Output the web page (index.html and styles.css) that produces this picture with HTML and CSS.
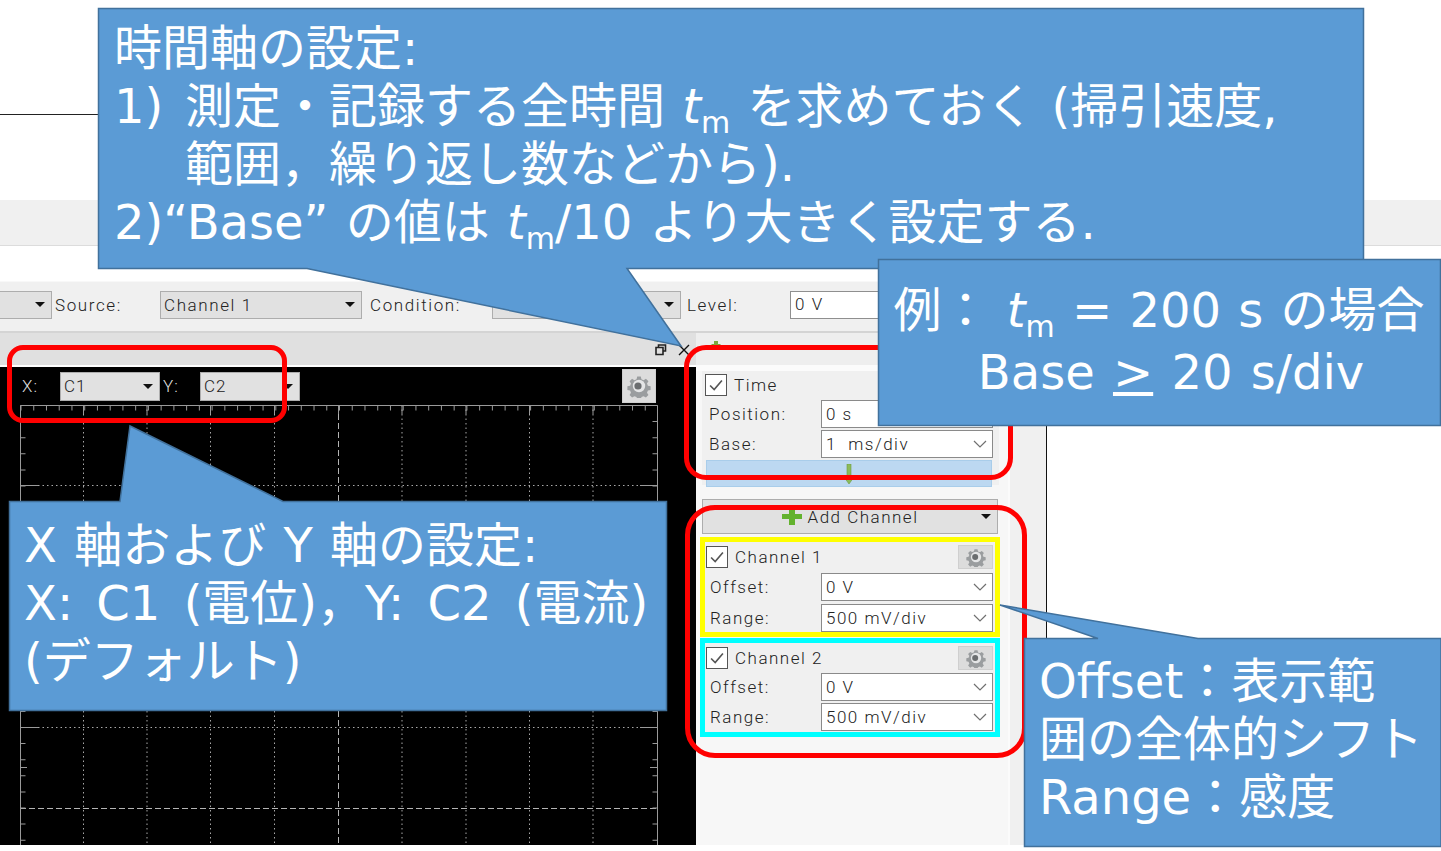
FILE: index.html
```html
<!DOCTYPE html>
<html lang="ja">
<head>
<meta charset="utf-8">
<title>時間軸の設定</title>
<link rel="stylesheet" href="styles.css">
</head>
<body>
<svg class="defs" width="0" height="0" aria-hidden="true">
  <symbol id="gear" viewBox="0 0 24 24">
    <path fill="#9a9d9f" d="M10 1.500h4l.7 3 2.400 1 2.600-1.600 2.800 2.800-1.600 2.600 1 2.400 3 .7v4l-3 .7-1 2.400 1.600 2.600-2.800 2.800-2.600-1.600-2.400 1-.7 3h-4l-.7-3-2.400-1-2.600 1.600-2.800-2.800 1.600-2.600-1-2.400-3-.7v-4l3-.7 1-2.400-1.600-2.600 2.800-2.800 2.600 1.600 2.400-1z" transform="translate(1.200 1.200) scale(.9)"/>
    <circle cx="12" cy="12" r="6.200" fill="#e4e5e6"/>
    <circle cx="11" cy="12" r="3.600" fill="#6a6d6f"/>
  </symbol>
  <symbol id="chev" viewBox="0 0 14 8">
    <path d="M1 1l6 6 6-6" fill="none" stroke="#707070" stroke-width="1.200"/>
  </symbol>
  <symbol id="check" viewBox="0 0 22 22">
    <path d="M4.500 11.500l4.500 4.500 8.500-10" fill="none" stroke="#555" stroke-width="1.800"/>
  </symbol>
</svg>

<div class="slide">
  <div class="top-rule"></div>
  <div class="band"></div>

  <div class="toolbar">
    <div class="combo combo-a"><i class="caret"></i></div>
    <span class="tlabel tl-source">Source:</span>
    <div class="combo combo-b"><span>Channel 1</span><i class="caret"></i></div>
    <span class="tlabel tl-cond">Condition:</span>
    <div class="combo combo-c"><i class="caret"></i></div>
    <span class="tlabel tl-level">Level:</span>
    <div class="level-input">0 V</div>
  </div>

  <div class="main">
    <div class="left">
      <div class="tabbar">
        <svg class="restore" viewBox="0 0 12 12"><path d="M3.500 3V1h7v6H8.500M1 3.500h7v7H1z" fill="none" stroke="#222" stroke-width="1.600"/></svg>
        <svg class="close" viewBox="0 0 12 12"><path d="M1 1l10 10M11 1L1 11" stroke="#111" stroke-width="1.400"/></svg>
      </div>
      <div class="scope">
        <svg class="plot" viewBox="0 0 695 478">
          <g class="dots">
            <path d="M83.500 38V478M147 38V478M210.500 38V478M274.500 38V478M402 38V478M466 38V478M529.500 38V478M593 38V478"/>
            <path d="M20 118.500H657M20 199H657M20 280H657M20 360.500H657"/>
          </g>
          <g class="dashes">
            <path d="M338.500 38V478"/>
            <path d="M20 441.500H657"/>
          </g>
          <path class="frame" d="M20.500 478V38.500H657.500V478"/>
          <g class="ticks">
            <path class="t-top" d="M20.500 41H657"/>
            <path class="t-left" d="M23 38V478"/>
            <path class="t-right" d="M655 38V478"/>
            <path d="M20 118.500H38M640 118.500H657M20 199H32M645 199H657M20 280H38M640 280H657M20 360.500H38M640 360.500H657M20 400.500H27M650 400.500H657"/>
            <path d="M83.500 38V47M147 38V47M210.500 38V47M274.500 38V47M338.500 38V47M402 38V47M466 38V47M529.500 38V47M593 38V47"/>
          </g>
        </svg>
        <div class="scope-controls">
          <span class="slabel sl-x">X:</span>
          <div class="combo scombo"><span>C1</span><i class="caret"></i></div>
          <span class="slabel sl-y">Y:</span>
          <div class="combo scombo"><span>C2</span><i class="caret"></i></div>
          <div class="gear-btn scope-gear"><svg><use href="#gear"/></svg></div>
        </div>
      </div>
    </div>

    <div class="panel">
      <div class="panel-col">
        <div class="panel-top"><svg class="mini-arrow" viewBox="0 0 12 8"><path d="M4 0h4v3h3L6 8 1 3h3z" fill="#7aa83e"/></svg></div>
        <div class="panel-gap"></div>
        <div class="group time-group">
          <div class="chk-row">
            <span class="chk"><svg><use href="#check"/></svg></span><span class="chk-label">Time</span>
          </div>
          <div class="row"><span class="rlabel">Position:</span><div class="field"><span>0 s</span></div></div>
          <div class="row"><span class="rlabel">Base:</span><div class="field"><span>1&nbsp; ms/div</span><svg class="chev"><use href="#chev"/></svg></div></div>
          <div class="apply"><svg class="apply-arrow" viewBox="0 0 10 20"><path d="M3 0h4v13h3l-5 7-5-7h3z" fill="#8dbb5a" stroke="#6c9a3f" stroke-width=".6"/></svg></div>
        </div>
        <div class="add-btn">
          <svg class="plus" viewBox="0 0 20 16"><path d="M7 0h6v5h7v5h-7v6H7v-6H0V5h7z" fill="#63b22e"/></svg>
          <span>Add Channel</span>
          <i class="caret caret-add"></i>
        </div>
        <div class="group channel yellow">
          <div class="chk-row">
            <span class="chk"><svg><use href="#check"/></svg></span><span class="chk-label">Channel 1</span>
            <div class="gear-btn chan-gear"><svg><use href="#gear"/></svg></div>
          </div>
          <div class="row"><span class="rlabel">Offset:</span><div class="field"><span>0 V</span><svg class="chev"><use href="#chev"/></svg></div></div>
          <div class="row"><span class="rlabel">Range:</span><div class="field"><span>500 mV/div</span><svg class="chev"><use href="#chev"/></svg></div></div>
        </div>
        <div class="group channel cyan">
          <div class="chk-row">
            <span class="chk"><svg><use href="#check"/></svg></span><span class="chk-label">Channel 2</span>
            <div class="gear-btn chan-gear"><svg><use href="#gear"/></svg></div>
          </div>
          <div class="row"><span class="rlabel">Offset:</span><div class="field"><span>0 V</span><svg class="chev"><use href="#chev"/></svg></div></div>
          <div class="row"><span class="rlabel">Range:</span><div class="field"><span>500 mV/div</span><svg class="chev"><use href="#chev"/></svg></div></div>
        </div>
      </div>
      <div class="panel-side"></div>
    </div>
  </div>

  <div class="redbox rb-xy"></div>
  <div class="redbox rb-time"></div>
  <div class="redbox rb-chan"></div>

  <svg class="callouts" viewBox="0 0 1441 851">
    <path d="M98.500 8.500H1363.500V268.500H627L681 346L307 268.500H98.500z"/>
    <path d="M878.500 259.500H1440.500V425.500H878.500z"/>
    <path d="M9.500 501.500H120L130 426L283 501.500H666.500V710.500H9.500z"/>
    <path d="M1024.500 638.500H1098L1000 605L1198 638.500H1441V846.500H1024.500z"/>
  </svg>

  <div class="note note-time">
    <div class="line">時間軸の設定:</div>
    <div class="line"><span class="num">1)</span>測定・記録する全時間 <i>t</i><sub>m</sub> を求めておく (掃引速度,</div>
    <div class="line hang">範囲，繰り返し数などから).</div>
    <div class="line">2)“Base” の値は <i>t</i><sub>m</sub>/10 より大きく設定する.</div>
  </div>
  <div class="note note-ex">
    <div class="line">例： <i>t</i><sub>m</sub> = 200 s の場合</div>
    <div class="line line-base">Base <u>&gt;</u> 20 s/div</div>
  </div>
  <div class="note note-xy">
    <div class="line line-xy1">X 軸および Y 軸の設定:</div>
    <div class="line line-xy2">X: C1 (電位)，Y: C2 (電流)</div>
    <div class="line">(デフォルト)</div>
  </div>
  <div class="note note-off">
    <div class="line">Offset：表示範</div>
    <div class="line">囲の全体的シフト</div>
    <div class="line">Range：感度</div>
  </div>
</div>
</body>
</html>
```
FILE: styles.css
```css
* { box-sizing: border-box; }
html, body { margin: 0; padding: 0; background: #fff; }
.defs { position: absolute; }

.slide {
  position: relative;
  width: 1441px;
  height: 851px;
  overflow: hidden;
  background: #fff;
  font-family: "Roboto", "Liberation Sans", sans-serif;
  color: #222;
}

.top-rule { width: 100px; height: 1px; margin-top: 114px; background: #222; }
.band {
  height: 46px;
  margin-top: 85px;
  background: #f0f0f0;
  border-bottom: 1px solid #dcdcdc;
}

.toolbar {
  display: flex;
  align-items: center;
  height: 52px;
  margin-top: 35px;
  padding-bottom: 4px;
  background: #f0f0f0;
  border-top: 1px solid #f8f8f8;
  border-bottom: 2px solid #d4d4d4;
  font-size: 17px;
  letter-spacing: 1.600px;
  font-weight: 300;
}
.combo {
  display: flex;
  align-items: center;
  justify-content: space-between;
  height: 28px;
  padding: 0 6px 0 3px;
  background: #e1e1e1;
  border: 1px solid #adadad;
}
.caret {
  display: block;
  width: 0;
  height: 0;
  border-left: 5px solid transparent;
  border-right: 5px solid transparent;
  border-top: 5px solid #111;
}
.combo-a { width: 52px; border-left: 0; justify-content: flex-end; }
.combo-b { width: 202px; }
.combo-c { width: 189px; justify-content: flex-end; }
.tlabel { white-space: nowrap; }
.tl-source { width: 108px; padding-left: 3px; }
.tl-cond { width: 130px; padding-left: 8px; }
.tl-level { width: 109px; padding-left: 6px; }
.level-input {
  width: 300px;
  height: 28px;
  padding: 2px 4px;
  background: #fff;
  border: 1px solid #8f8f8f;
}

.main { display: flex; height: 512px; }
.left { display: flex; flex-direction: column; width: 696px; }
.tabbar {
  display: flex;
  align-items: center;
  justify-content: flex-end;
  gap: 11px;
  height: 34px;
  padding: 0 6px 0 0;
  background: #e0e0e0;
  border-bottom: 2px solid #fff;
}
.restore { width: 12px; height: 12px; margin-top: 2px; }
.close { width: 12px; height: 12px; margin-top: 2px; }

.scope { position: relative; flex: 1; background: #000; }
.plot { position: absolute; inset: 0; width: 695px; height: 478px; }
.dots path { fill: none; stroke: #a8a8a8; stroke-width: 1; stroke-dasharray: 1.500 3; }
.dashes path { fill: none; stroke: #b4b4b4; stroke-width: 1; stroke-dasharray: 6 3; }
.frame { fill: none; stroke: #9a9a9a; stroke-width: 1; }
.ticks path { fill: none; stroke: #9a9a9a; stroke-width: 1; }
.ticks .t-top { stroke-width: 5; stroke-dasharray: 1 11.740; }
.ticks .t-left, .ticks .t-right { stroke-width: 5; stroke-dasharray: 1 15.100; }

.scope-controls {
  position: relative;
  display: flex;
  align-items: center;
  height: 38px;
  font-size: 17px;
  font-weight: 300;
  letter-spacing: 1px;
}
.slabel { color: #ddd; }
.sl-x { width: 60px; padding-left: 22px; }
.sl-y { width: 40px; padding-left: 3px; }
.scombo { width: 100px; height: 29px; }
.gear-btn {
  display: flex;
  align-items: center;
  justify-content: center;
  background: #dcdcdc;
  border: 1px solid #cfcfcf;
}
.gear-btn svg { width: 24px; height: 24px; filter: blur(.5px); }
.scope-gear { width: 34px; height: 34px; margin-left: 322px; }

.panel {
  display: flex;
  width: 351px;
  background: #f0f0f0;
  border-right: 1px solid #111;
}
.panel-col {
  width: 314px;
  padding-left: 6px;
  background: #f7f7f7;
  border-right: 2px solid #fbfbfb;
  font-size: 17px;
  font-weight: 300;
  letter-spacing: 1.500px;
}
.panel-side { flex: 1; }
.panel-top { position: relative; height: 32px; margin-left: -6px; background: #eeeeee; }
.mini-arrow { position: absolute; left: 14px; top: 8px; width: 12px; height: 8px; }
.panel-gap { height: 6px; background: #fbfbfb; margin-left: -6px; }

.group { width: 297px; background: #f0f0f0; }
.time-group { padding: 0 5px 0 3px; height: 114px; }
.chk-row { position: relative; display: flex; align-items: center; height: 28px; }
.chk {
  display: block;
  width: 22px;
  height: 22px;
  background: #fff;
  border: 1px solid #555;
}
.chk svg { display: block; width: 20px; height: 20px; }
.chk-label { margin-left: 7px; }
.row { display: flex; align-items: center; height: 30px; }
.rlabel { width: 116px; padding-left: 4px; }
.field {
  display: flex;
  align-items: center;
  justify-content: space-between;
  width: 172px;
  height: 28px;
  padding: 0 4px;
  background: #fff;
  border: 1px solid #8a8a8a;
}
.chev { width: 14px; height: 8px; margin-right: 1px; }
.apply {
  display: flex;
  justify-content: center;
  align-items: center;
  width: 286px;
  height: 27px;
  margin: 1px 0 0 1px;
  background: #bcd8f1;
  border: 1px solid #a9cdea;
}
.apply-arrow { width: 10px; height: 20px; }

.add-btn {
  position: relative;
  display: flex;
  align-items: center;
  justify-content: center;
  gap: 6px;
  width: 296px;
  height: 35px;
  margin: 14px 0 3px 0;
  background: #e1e1e1;
  border: 1px solid #adadad;
}
.plus { width: 20px; height: 16px; }
.caret-add { position: absolute; right: 6px; top: 14px; }

.channel {
  width: 300px;
  height: 100px;
  margin-left: -2px;
  padding: 1px 0 0 1px;
  border: 5px solid #ffff00;
}
.channel.cyan { margin-top: 1px; height: 99px; border-color: #00ffff; }
.yellow .row { height: 31px; }
.chan-gear { position: absolute; right: 2px; top: 2px; width: 35px; height: 24px; }
.chan-gear svg { width: 20px; height: 20px; }
.channel .rlabel { padding-left: 4px; width: 115px; }

.redbox { position: absolute; border: 5px solid #ff0000; }
.rb-xy { left: 7px; top: 345px; width: 280px; height: 78px; border-radius: 16px; }
.rb-time { left: 684px; top: 345px; width: 329px; height: 135px; border-radius: 22px; }
.rb-chan { left: 685px; top: 505px; width: 342px; height: 253px; border-radius: 30px; }

.callouts { position: absolute; inset: 0; width: 1441px; height: 851px; }
.callouts path { fill: #5b9bd5; stroke: #41719c; stroke-width: 1.500; }

.note {
  position: absolute;
  color: #fff;
  font-family: "DejaVu Sans", "Noto Sans CJK JP", sans-serif;
  font-size: 48px;
  line-height: 58px;
  white-space: nowrap;
}
.note .line { height: 58px; }
.note i { font-style: italic; }
.note sub { font-size: 30px; line-height: 0; vertical-align: -10px; }
.num { display: inline-block; width: 71px; }
.hang { padding-left: 71px; }

.note-time { left: 114px; top: 19px; word-spacing: 2px; }
.note-ex { left: 878px; top: 279px; width: 562px; text-align: center; line-height: 62px; word-spacing: 2px; }
.note-ex .line { height: 62px; }
.note-ex .line-base { padding-left: 24px; word-spacing: 3px; }
.note-xy { left: 24px; top: 516px; }
.line-xy1 { word-spacing: 2px; }
.line-xy2 { word-spacing: 8px; }
.note-off { left: 1039px; top: 652px; }
```
